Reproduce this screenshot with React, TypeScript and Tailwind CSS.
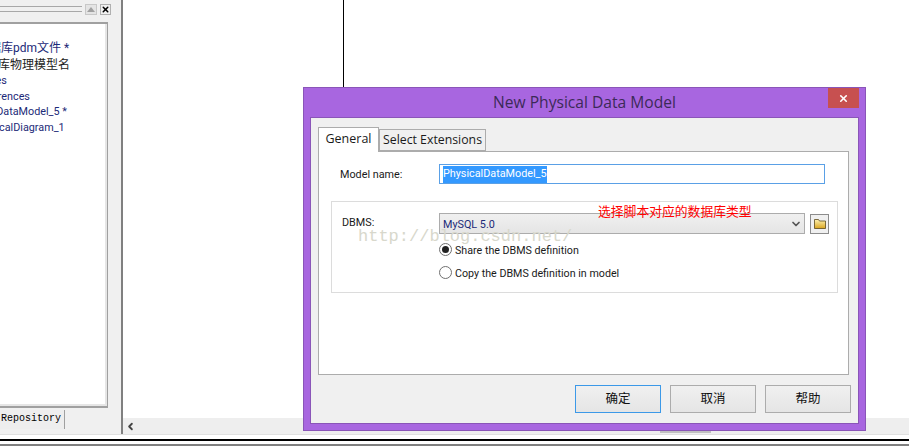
import { ChevronDown, ChevronLeft, X } from 'lucide-react'

const ui = "font-['Roboto','Noto_Sans_CJK_SC',sans-serif]"

const treeRows = [
  { text: '数据库pdm文件 *', cls: 'ml-[-23px] text-[12px] text-[#1c2a78]', h: 'h-[17px]' },
  { text: '据库物理模型名', cls: 'ml-[-14px] text-[12px] text-[#222]', h: 'h-[16px]' },
  { text: 'Entities', cls: 'ml-[-29px] text-[10.8px] text-[#1c2a78]', h: 'h-[16px]' },
  { text: 'References', cls: 'ml-[-24px] text-[10.8px] text-[#1c2a78]', h: 'h-[15px]' },
  { text: 'PhysicalDataModel_5 *', cls: 'ml-[-44px] text-[10.8px] text-[#1c2a78]', h: 'h-[16px]' },
  { text: 'PhysicalDiagram_1', cls: 'ml-[-27px] text-[10.8px] text-[#1c2a78]', h: 'h-[16px]' },
]

function Sidebar() {
  return (
    <div className="flex h-[434px] w-[123px] shrink-0 flex-col border-r-2 border-[#808080] bg-[#f0f0f0]">
      <div className="flex h-[22px] items-start pt-[4px]">
        <div className="mt-[2px] h-[6px] w-[82px] border-y border-[#a8a8a8]" />
        <div className="ml-[3px] flex h-[11px] w-[12px] items-center justify-center border border-[#c8c8c8] bg-[#e4e4e4]">
          <div className="h-0 w-0 border-x-[4px] border-b-[5px] border-x-transparent border-b-[#a0a0a0]" />
        </div>
        <div className="ml-[3px] flex h-[11px] w-[11px] items-center justify-center border border-[#b0b0b0] bg-[#f0f0f0]">
          <X className="h-[9px] w-[9px] text-black" strokeWidth={4} />
        </div>
      </div>
      <div className="h-[386px] w-[108px] overflow-hidden border-y-2 border-r border-[#a0a0a0] bg-white">
        <div className="h-full overflow-hidden border-r-2 border-b-2 border-[#e6e6e6] pt-[16px]">
          {treeRows.map(r => (
            <div key={r.text} className={`${r.h} ${r.cls} whitespace-nowrap leading-[16px] ${ui}`}>
              {r.text}
            </div>
          ))}
        </div>
      </div>
      <div className="mt-[2px] flex h-[19px] w-[65px] items-center border-r border-[#a0a0a0] bg-[#eeeeee] pb-[3px] pl-[1px] font-['Liberation_Mono',monospace] text-[10px] text-black">
        Repository
      </div>
    </div>
  )
}

function Radio({ on, label }: { on?: boolean; label: string }) {
  return (
    <div className="flex h-[13px] items-center gap-[3px]">
      <div className="flex h-[13px] w-[13px] items-center justify-center rounded-full border border-[#707070] bg-white">
        {on && <div className="h-[7px] w-[7px] rounded-full bg-[#222]" />}
      </div>
      <span className="pt-[4px] text-[10.7px] text-[#1a1a1a]">{label}</span>
    </div>
  )
}

function FootButton({ label, primary }: { label: string; primary?: boolean }) {
  return (
    <div className={`flex h-[28px] w-[86px] items-center justify-center border bg-gradient-to-b from-[#f0f0f0] to-[#e5e5e5] text-[12.5px] text-[#111] ${primary ? 'border-[#3c99e8]' : 'border-[#acacac]'}`}>
      {label}
    </div>
  )
}

function Dialog() {
  return (
    <div className={`absolute left-[303px] top-[87px] flex h-[344px] w-[563px] flex-col border border-[#8a55b8] bg-[#a866e0] px-[6px] pb-[6px] ${ui}`}>
      <div className="relative flex h-[29px] shrink-0 items-center justify-center font-['Open_Sans',sans-serif] text-[15.6px] text-[#3c2a58]">
        New Physical Data Model
        <div className="absolute right-0 top-0 flex h-[20px] w-[31px] items-center justify-center bg-[#c75050]">
          <X className="h-[11px] w-[11px] text-white" strokeWidth={3.5} />
        </div>
      </div>
      <div className="flex grow flex-col border border-[#8a55b8] bg-[#f0f0f0] pl-[7px] pr-[7px] pt-[9px]">
        <div className="flex h-[24px] items-end">
          <div className="relative z-10 mb-[-1px] flex h-[25px] w-[61px] items-center justify-center border border-b-0 border-[#acacac] bg-white pb-[1px] font-['Open_Sans',sans-serif] text-[12.5px] text-[#1a1a1a]">
            General
          </div>
          <div className="flex h-[22px] w-[107px] items-center justify-center border border-[#acacac] bg-[#f0f0f0] pt-[1px] font-['Open_Sans',sans-serif] text-[12.3px] text-[#1a1a1a]">
            Select Extensions
          </div>
        </div>
        <div className="relative h-[224px] w-[531px] border border-[#acacac] bg-white pl-[12px] pt-[12px]">
          <div className="flex h-[20px] items-center">
            <span className="w-[108px] pl-[9px] pt-[3px] text-[10.8px] text-[#1a1a1a]">Model name:</span>
            <div className="flex h-[20px] w-[386px] items-center border border-[#5aa0e6] pl-[3px] pt-[1px] text-[10.8px]">
              <span className="bg-[#3399ff] text-white">PhysicalDataModel_5</span>
            </div>
          </div>
          <div className="mt-[17px] h-[92px] w-[507px] border border-[#dcdcdc] pl-[10px] pt-[11px]">
            <div className="flex h-[21px] items-center">
              <span className="w-[97px] text-[10.8px] text-[#1a1a1a]">DBMS:</span>
              <div className="flex h-[21px] w-[366px] items-center justify-between border border-[#acacac] bg-gradient-to-b from-[#f0f0f0] to-[#e5e5e5] pl-[3px] pr-[2px] text-[10.8px] text-[#1c2a78]">
                <span className="pt-[3px]">MySQL 5.0</span>
                <ChevronDown className="h-[12px] w-[12px] text-[#555]" strokeWidth={3.5} />
              </div>
              <div className="ml-[5px] flex h-[20px] w-[19px] items-center justify-center border border-[#8c8c8c] bg-[#f0f0f0]">
                <svg width="12" height="10" viewBox="0 0 12 10">
                  <defs>
                    <linearGradient id="folder" x1="0" y1="0" x2="0" y2="1">
                      <stop offset="0" stopColor="#fff2b0" />
                      <stop offset="1" stopColor="#d9a520" />
                    </linearGradient>
                  </defs>
                  <path d="M.5.500h4l1 1.500h6v7.500H.5z" fill="url(#folder)" stroke="#5c4a1a" strokeWidth="0.8" />
                </svg>
              </div>
            </div>
            <div className="ml-[97px] mt-[9px] flex flex-col gap-[10px]">
              <Radio on label="Share the DBMS definition" />
              <Radio label="Copy the DBMS definition in model" />
            </div>
          </div>
          <div className="absolute left-[279px] top-[52px] whitespace-nowrap text-[12.8px] leading-[16px] text-[#ff0000]">
            选择脚本对应的数据库类型
          </div>
          <div className="absolute left-[39px] top-[75px] whitespace-nowrap font-['Liberation_Mono',monospace] text-[17px] leading-[20px] text-[#d8d8cc]">
            http://blog.csdn.net/
          </div>
        </div>
        <div className="mt-[10px] flex justify-end gap-[9px]">
          <FootButton primary label="确定" />
          <FootButton label="取消" />
          <FootButton label="帮助" />
        </div>
      </div>
    </div>
  )
}

export default function App() {
  return (
    <div className="relative h-[448px] w-[909px] overflow-hidden bg-white">
      <div className="flex h-[434px]">
        <Sidebar />
        <div className="flex grow flex-col">
          <div className="flex grow">
            <div className="ml-[220px] h-[88px] w-px bg-black" />
          </div>
          <div className="flex h-[16px] items-center bg-[#eeeeee] pl-[2px]">
            <ChevronLeft className="h-[11px] w-[11px] text-[#444]" strokeWidth={4} />
            <div className="mb-[1px] ml-[524px] h-[2px] w-[51px] self-end bg-[#c0c0c0]" />
          </div>
        </div>
      </div>
      <div className="h-px bg-[#e0e0e0]" />
      <div className="mt-[4px] h-[2px] bg-black" />
      <div className="mt-[3px] h-[2px] bg-[#808080]" />
      <Dialog />
    </div>
  )
}
